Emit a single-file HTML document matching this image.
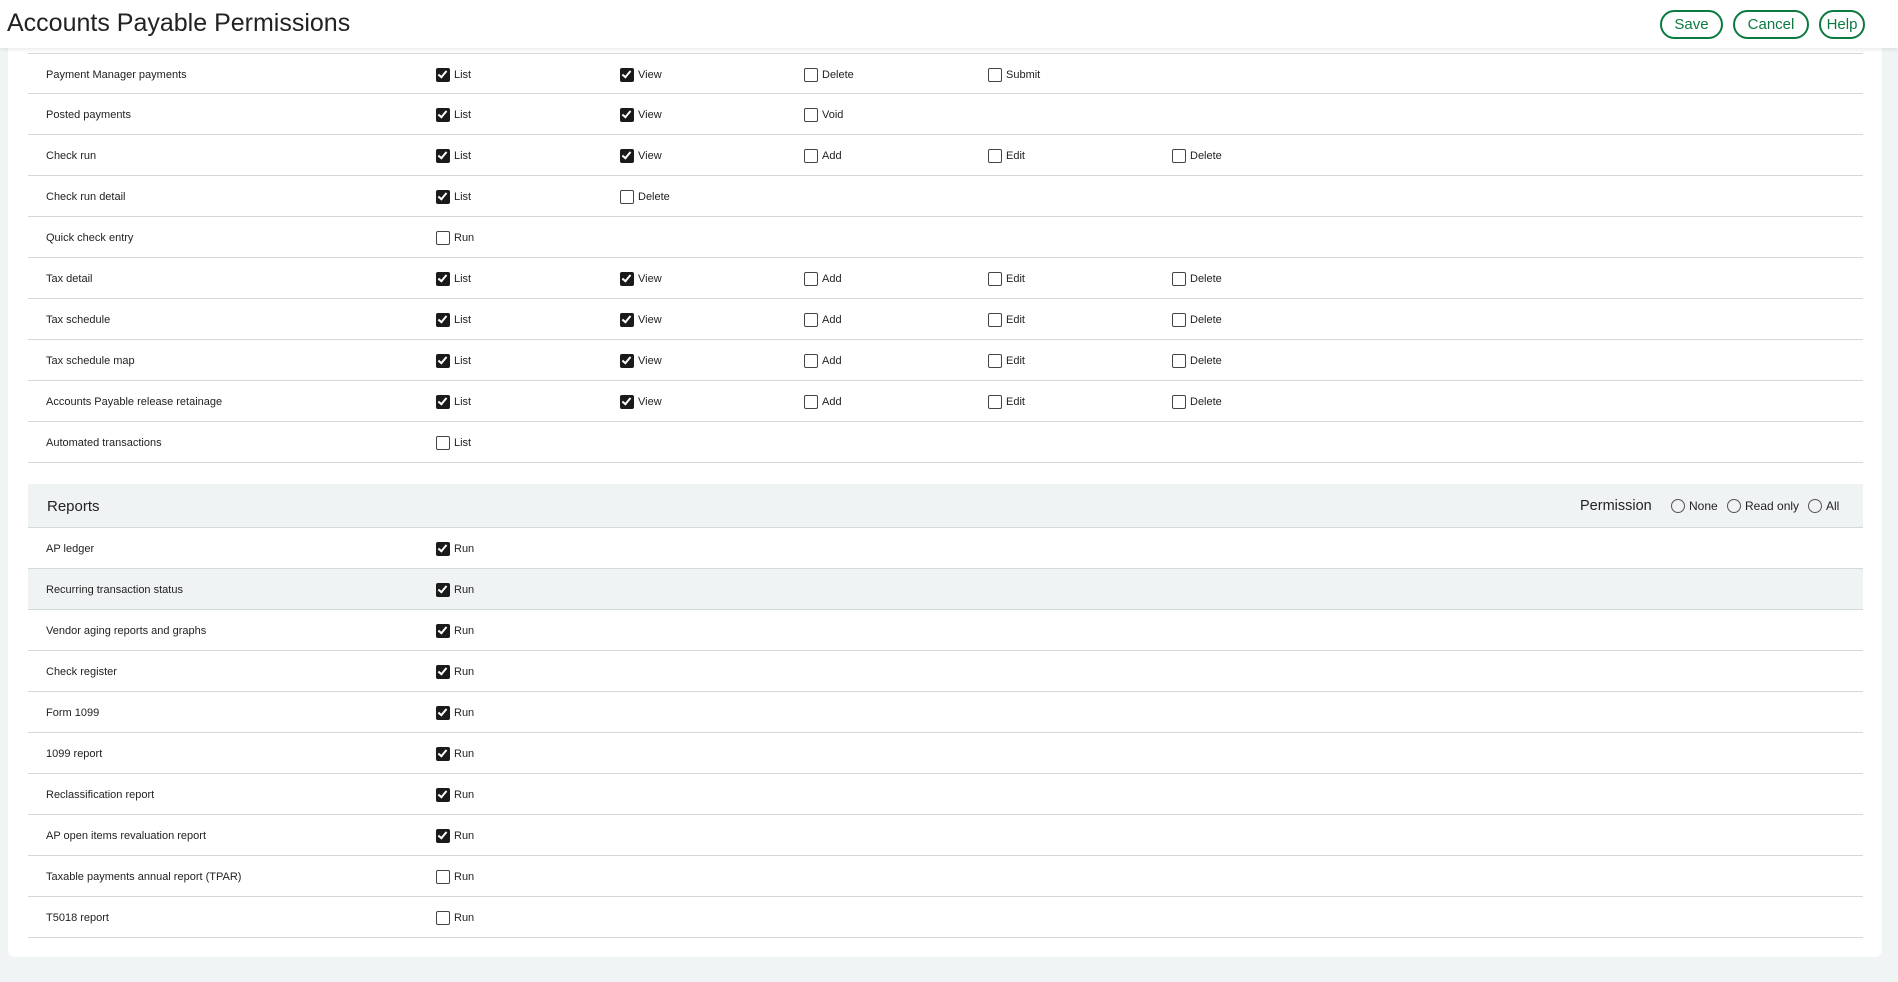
<!DOCTYPE html>
<html><head><meta charset="utf-8"><style>
*{box-sizing:border-box;margin:0;padding:0}
body{width:1898px;height:982px;background:#f1f4f5;font-family:"Liberation Sans",Arial,sans-serif;color:#222;position:relative;overflow:hidden}
.hdr{position:absolute;left:0;top:0;width:1898px;height:48px;background:#fff;box-shadow:0 2px 4px rgba(0,0,0,.08);z-index:2}
.hdr h1{position:absolute;left:7px;top:9px;font-size:25px;font-weight:normal;color:#222}
.btn{position:absolute;top:10px;height:29px;border:2px solid #0c7a3f;border-radius:15px;color:#0c7a3f;font-size:15px;line-height:25px;text-align:center;background:#fff}
.card{position:absolute;left:8px;top:40px;width:1874px;height:917px;background:#fff;border-radius:7px}
.row{position:absolute;left:28px;width:1835px;height:41px;border-bottom:1px solid #d3d8dc;font-size:11px}
.row.top{border-top:1px solid #d3d8dc}
.lbl{position:absolute;left:18px;top:15px}
.cb{position:absolute;top:14px;font-size:11px;padding-left:18px;line-height:14px}
.cb::before{content:"";position:absolute;left:0;top:0;width:12px;height:12px;border:1px solid #444;border-radius:2px;background:#fff}
.cb.on::before{background:#1a1a1a;border-color:#1a1a1a}
.cb.on::after{content:"";position:absolute;left:4px;top:1px;width:3px;height:7px;border:solid #fff;border-width:0 2px 2px 0;transform:rotate(40deg)}
.rh{position:absolute;left:28px;top:484px;width:1835px;height:44px;background:#f0f3f4;border-bottom:1px solid #d3d8dc;font-size:15px}
.rd{position:absolute;top:15px;font-size:12px;padding-left:18px;line-height:14px}
.rd::before{content:"";position:absolute;left:0;top:0;width:12px;height:12px;border:1px solid #555;border-radius:50%}
</style></head><body>
<div class="hdr"><h1>Accounts Payable Permissions</h1>
<div class="btn" style="left:1660px;width:63px">Save</div>
<div class="btn" style="left:1733px;width:76px">Cancel</div>
<div class="btn" style="left:1819px;width:46px">Help</div>
</div>
<div class="card"></div>

<div class="row top" style="top:53px"><span class="lbl">Payment Manager payments</span><span class="cb on" style="left:408px">List</span><span class="cb on" style="left:592px">View</span><span class="cb" style="left:776px">Delete</span><span class="cb" style="left:960px">Submit</span></div>
<div class="row" style="top:94px"><span class="lbl">Posted payments</span><span class="cb on" style="left:408px">List</span><span class="cb on" style="left:592px">View</span><span class="cb" style="left:776px">Void</span></div>
<div class="row" style="top:135px"><span class="lbl">Check run</span><span class="cb on" style="left:408px">List</span><span class="cb on" style="left:592px">View</span><span class="cb" style="left:776px">Add</span><span class="cb" style="left:960px">Edit</span><span class="cb" style="left:1144px">Delete</span></div>
<div class="row" style="top:176px"><span class="lbl">Check run detail</span><span class="cb on" style="left:408px">List</span><span class="cb" style="left:592px">Delete</span></div>
<div class="row" style="top:217px"><span class="lbl">Quick check entry</span><span class="cb" style="left:408px">Run</span></div>
<div class="row" style="top:258px"><span class="lbl">Tax detail</span><span class="cb on" style="left:408px">List</span><span class="cb on" style="left:592px">View</span><span class="cb" style="left:776px">Add</span><span class="cb" style="left:960px">Edit</span><span class="cb" style="left:1144px">Delete</span></div>
<div class="row" style="top:299px"><span class="lbl">Tax schedule</span><span class="cb on" style="left:408px">List</span><span class="cb on" style="left:592px">View</span><span class="cb" style="left:776px">Add</span><span class="cb" style="left:960px">Edit</span><span class="cb" style="left:1144px">Delete</span></div>
<div class="row" style="top:340px"><span class="lbl">Tax schedule map</span><span class="cb on" style="left:408px">List</span><span class="cb on" style="left:592px">View</span><span class="cb" style="left:776px">Add</span><span class="cb" style="left:960px">Edit</span><span class="cb" style="left:1144px">Delete</span></div>
<div class="row" style="top:381px"><span class="lbl">Accounts Payable release retainage</span><span class="cb on" style="left:408px">List</span><span class="cb on" style="left:592px">View</span><span class="cb" style="left:776px">Add</span><span class="cb" style="left:960px">Edit</span><span class="cb" style="left:1144px">Delete</span></div>
<div class="row" style="top:422px"><span class="lbl">Automated transactions</span><span class="cb" style="left:408px">List</span></div>

<div class="rh"><span style="position:absolute;left:19px;top:14px">Reports</span><span style="position:absolute;left:1552px;top:14px;font-size:14.5px">Permission</span>
<span class="rd" style="left:1643px">None</span><span class="rd" style="left:1699px">Read only</span><span class="rd" style="left:1780px">All</span></div>

<div class="row" style="top:528px"><span class="lbl">AP ledger</span><span class="cb on" style="left:408px">Run</span></div>
<div class="row" style="top:569px;background:#f0f3f4"><span class="lbl">Recurring transaction status</span><span class="cb on" style="left:408px">Run</span></div>
<div class="row" style="top:610px"><span class="lbl">Vendor aging reports and graphs</span><span class="cb on" style="left:408px">Run</span></div>
<div class="row" style="top:651px"><span class="lbl">Check register</span><span class="cb on" style="left:408px">Run</span></div>
<div class="row" style="top:692px"><span class="lbl">Form 1099</span><span class="cb on" style="left:408px">Run</span></div>
<div class="row" style="top:733px"><span class="lbl">1099 report</span><span class="cb on" style="left:408px">Run</span></div>
<div class="row" style="top:774px"><span class="lbl">Reclassification report</span><span class="cb on" style="left:408px">Run</span></div>
<div class="row" style="top:815px"><span class="lbl">AP open items revaluation report</span><span class="cb on" style="left:408px">Run</span></div>
<div class="row" style="top:856px"><span class="lbl">Taxable payments annual report (TPAR)</span><span class="cb" style="left:408px">Run</span></div>
<div class="row" style="top:897px"><span class="lbl">T5018 report</span><span class="cb" style="left:408px">Run</span></div>
</body></html>
